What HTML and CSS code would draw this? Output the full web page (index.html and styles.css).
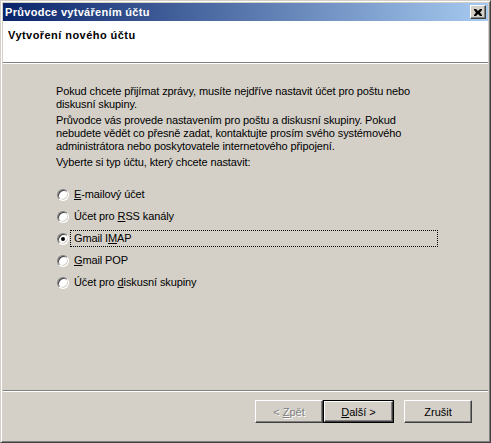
FILE: index.html
```html
<!DOCTYPE html>
<html lang="cs">
<head>
<meta charset="utf-8">
<title>Průvodce vytvářením účtu</title>
<link rel="stylesheet" href="styles.css">
</head>
<body>
<div class="window">
  <div class="titlebar">
    <span class="title">Průvodce vytvářením účtu</span>
    <span class="close-btn"><svg width="8" height="7" viewBox="0 0 8 7"><path d="M0 0h2l2 2 2-2h2v1l-2 2.5 2 2.5v1h-2l-2-2-2 2h-2v-1l2-2.5-2-2.5z" fill="#000"/></svg></span>
  </div>
  <div class="header">
    <div class="header-title">Vytvoření nového účtu</div>
  </div>
  <div class="content">
    <p class="para">Pokud chcete přijímat zprávy, musíte nejdříve nastavit účet pro poštu nebo<br>diskusní skupiny.</p>
    <p class="para">Průvodce vás provede nastavením pro poštu a diskusní skupiny. Pokud<br>nebudete vědět co přesně zadat, kontaktujte prosím svého systémového<br>administrátora nebo poskytovatele internetového připojení.</p>
    <p class="para">Vyberte si typ účtu, který chcete nastavit:</p>
    <div class="options">
      <div class="option"><span class="radio"></span><span class="label"><u>E</u>-mailový účet</span></div>
      <div class="option"><span class="radio"></span><span class="label">Účet pro <u>R</u>SS kanály</span></div>
      <div class="option"><span class="radio checked"></span><span class="label focused">Gmail I<u>M</u>AP</span></div>
      <div class="option"><span class="radio"></span><span class="label"><u>G</u>mail POP</span></div>
      <div class="option"><span class="radio"></span><span class="label">Účet pro <u>d</u>iskusní skupiny</span></div>
    </div>
  </div>
  <div class="footer">
    <div class="buttons">
      <span class="btn disabled">&lt;&nbsp;<u>Z</u>pět</span>
      <span class="btn default"><span class="btn-inner"><u>D</u>alší &gt;</span></span>
      <span class="btn cancel">Zrušit</span>
    </div>
  </div>
</div>
</body>
</html>
```
FILE: styles.css
```css
html, body {
  margin: 0;
  padding: 0;
  background: #d4d0c8;
}
body {
  font-family: "Liberation Sans", Arial, sans-serif;
  font-size: 11px;
  color: #000;
}
.window {
  width: 491px;
  height: 443px;
  box-sizing: border-box;
  border: 1px solid;
  border-color: #d4d0c8 #404040 #404040 #d4d0c8;
  box-shadow: inset 1px 1px #fff, inset -1px -1px #808080;
  padding: 2px 2px 2px 2px;
  display: flex;
  flex-direction: column;
  background: #d4d0c8;
}
.titlebar {
  height: 18px;
  background: linear-gradient(to right, #0a246a, #a6caf0);
  display: flex;
  align-items: center;
  justify-content: space-between;
  padding: 0 2px 0 2px;
  color: #fff;
  font-weight: bold;
}
.title {
  font-size: 11px;
  letter-spacing: 0.3px;
}
.close-btn {
  width: 16px;
  height: 14px;
  box-sizing: border-box;
  background: #d4d0c8;
  border: 1px solid;
  border-color: #fff #404040 #404040 #fff;
  box-shadow: inset -1px -1px #808080, inset 1px 1px #d4d0c8;
  display: flex;
  align-items: center;
  justify-content: center;
}
.header {
  background: #fff;
  height: 42px;
  border-bottom: 1px solid #808080;
  box-shadow: 0 1px #fff;
  box-sizing: border-box;
}
.header-title {
  font-weight: bold;
  letter-spacing: 0.45px;
  padding: 8px 0 0 5px;
}
.content {
  flex: 1;
  padding: 21px 0 0 53px;
  margin-top: 1px;
  letter-spacing: -0.12px;
}
.para {
  margin: 0 0 3px 0;
  line-height: 13px;
}
.options {
  margin-top: 17px;
  display: flex;
  flex-direction: column;
  gap: 5px;
}
.option {
  display: flex;
  align-items: center;
  height: 17px;
}
.radio {
  width: 12px;
  height: 12px;
  box-sizing: border-box;
  border-radius: 50%;
  background: #fff;
  border: 1px solid;
  border-color: #808080 #fff #fff #808080;
  box-shadow: inset 1px 1px #404040, inset -1px -1px #d4d0c8;
  margin-left: 1px;
  margin-right: 1px;
  display: flex;
  align-items: center;
  justify-content: center;
}
.radio.checked::after {
  content: "";
  width: 4px;
  height: 4px;
  border-radius: 50%;
  background: #000;
}
.label {
  padding: 0 3px;
  height: 17px;
  box-sizing: border-box;
  border: 1px solid transparent;
  line-height: 15px;
}
.label.focused {
  width: 368px;
  border: 1px dotted #000;
}
.footer {
  height: 49px;
  border-top: 1px solid #808080;
  box-shadow: inset 0 1px #fff;
  box-sizing: border-box;
  margin-bottom: 1px;
}
.buttons {
  display: flex;
  padding: 9px 0 0 252px;
}
.btn {
  width: 68px;
  height: 23px;
  box-sizing: border-box;
  display: flex;
  align-items: center;
  justify-content: center;
  background: #d4d0c8;
  border: 1px solid;
  border-color: #fff #404040 #404040 #fff;
  box-shadow: inset -1px -1px #808080, inset 1px 1px #d4d0c8;
}
.btn.disabled {
  color: #808080;
  text-shadow: 1px 1px #fff;
}
.btn.default {
  width: 71px;
  border: 1px solid #000;
  box-shadow: none;
  padding: 0;
  align-items: stretch;
  justify-content: stretch;
}
.btn-inner {
  flex: 1;
  display: flex;
  align-items: center;
  justify-content: center;
  border: 1px solid;
  border-color: #fff #404040 #404040 #fff;
  box-shadow: inset -1px -1px #808080;
}
.btn.cancel {
  margin-left: 10px;
}
```
